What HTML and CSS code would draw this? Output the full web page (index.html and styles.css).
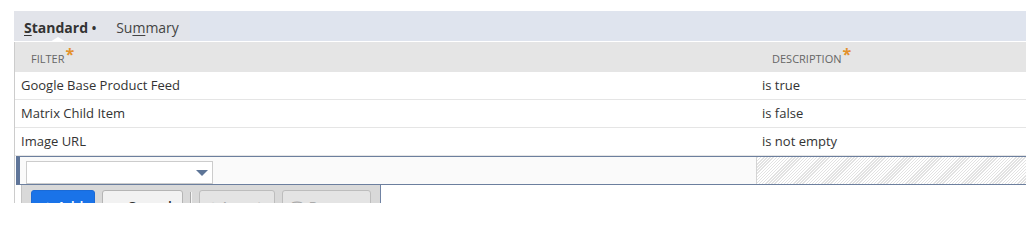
FILE: index.html
```html
<!DOCTYPE html>
<html>
<head>
<meta charset="utf-8">
<link rel="stylesheet" href="styles.css">
</head>
<body>
<div class="page">
  <div class="tabbar">
    <div class="tabgroup">
      <span class="tab active"><u>S</u>tandard <span class="dot">•</span></span>
      <span class="tab">Su<u>m</u>mary</span>
    </div>
  </div>
  <div class="grid">
    <div class="row head">
      <div class="c1">FILTER<span class="req">*</span></div>
      <div class="c2">DESCRIPTION<span class="req">*</span></div>
    </div>
    <div class="row">
      <div class="c1">Google Base Product Feed</div>
      <div class="c2">is true</div>
    </div>
    <div class="row">
      <div class="c1">Matrix Child Item</div>
      <div class="c2">is false</div>
    </div>
    <div class="row">
      <div class="c1">Image URL</div>
      <div class="c2">is not empty</div>
    </div>
    <div class="row edit">
      <div class="c1">
        <div class="select"><span class="caret"></span></div>
      </div>
      <div class="c2 hatch"></div>
    </div>
    <div class="btnbar">
      <button class="btn primary"><span class="ico">&#x2B06;</span>Add</button>
      <button class="btn"><span class="ico">&#x2716;</span>Cancel</button>
      <span class="sep"></span>
      <button class="btn disabled"><span class="ico">&#x2935;</span>Insert</button>
      <button class="btn disabled"><span class="ico">&#x1F5D1;</span>Remove</button>
    </div>
  </div>
</div>
</body>
</html>
```
FILE: styles.css
```css
* { box-sizing: border-box; }
html, body { margin: 0; padding: 0; background: #fff; height: 203px; overflow: hidden; }
body {
  font-family: "Open Sans", "Liberation Sans", sans-serif;
  font-size: 13px;
  color: #333;
}
.page {
  padding: 11px 0 0 14px;
}
.tabbar {
  height: 31px;
  background: #dfe4ee;
  border-bottom: 1px solid #fff;
  display: flex;
}
.tabgroup {
  width: 176px;
  background: #e2e4ea;
  display: flex;
  align-items: center;
  padding: 3px 0 0 10px;
  gap: 20px;
}
.tab {
  font-size: 14px;
  color: #444;
  position: relative;
  line-height: 27px;
}
.tab.active {
  font-weight: 700;
  color: #333;
}
.tab.active::after {
  content: "";
  position: absolute;
  left: 26px;
  bottom: 0;
  border-left: 8px solid transparent;
  border-right: 8px solid transparent;
  border-bottom: 5px solid #fff;
}
.tab .dot { font-weight: 700; font-size: 12px; }
.tab u { text-decoration-thickness: 1px; text-underline-offset: 2px; }
.grid {
  border-left: 1px solid #ccc;
}
.row {
  display: flex;
  height: 28px;
  border-bottom: 1px solid #e5e5e5;
  align-items: center;
  padding-bottom: 2px;
}
.row .c1 {
  width: 741px;
  padding-left: 6px;
  flex: none;
}
.row .c2 {
  flex: 1;
  padding-left: 6px;
}
.row.head {
  height: 30px;
  background: #e5e5e5;
  border-bottom: none;
  font-size: 11px;
  color: #666;
  padding: 0;
}
.row.head .c1, .row.head .c2 { padding-left: 16px; }
.req {
  color: #e3912d;
  font-size: 16px;
  font-weight: 700;
  position: relative;
  top: -3px;
  margin-left: 1px;
}
.row.edit {
  height: 29px;
  margin-left: 1px;
  border-top: 1px solid #6c7f9e;
  border-bottom: 1px solid #6c7f9e;
  border-left: 4px solid #5f7599;
  align-items: stretch;
  background: #fafafa;
  padding: 0;
}
.row.edit .c1 {
  width: 736px;
  padding: 4px 0 0 6px;
}
.select {
  width: 187px;
  height: 23px;
  background: #fff;
  border: 1px solid #ccc;
  position: relative;
}
.caret {
  position: absolute;
  right: 4px;
  top: 8px;
  border-left: 6px solid transparent;
  border-right: 6px solid transparent;
  border-top: 6px solid #5d7597;
}
.hatch {
  border-left: 1px solid #d4d4d4;
  background: repeating-linear-gradient(-45deg, #ffffff 0 1.2px, #e2e2e2 1.2px 2.2px);
}
.btnbar {
  margin-left: 6px;
  width: 360px;
  height: 40px;
  background: #d9d9d9;
  border-left: 1px solid #c4c4c4;
  border-right: 1px solid #7083a3;
  display: flex;
  align-items: flex-start;
  padding: 5px 0 0 9px;
  gap: 7px;
}
.btn {
  font-family: "Open Sans", "Liberation Sans", sans-serif;
  font-size: 14px;
  font-weight: 600;
  height: 28px;
  border-radius: 3px;
  border: 1px solid #b5b5b5;
  background: #f2f2f2;
  color: #333;
  padding: 0;
  line-height: 26px;
  display: flex;
  align-items: center;
  justify-content: center;
  gap: 5px;
  padding-top: 5px;
}
.btn .ico { font-size: 11px; color: #555; }
.btn.primary {
  width: 64px;
  background: #1a73e8;
  border-color: #1a6ad6;
  color: #fff;
}
.btn.primary .ico { color: #fff; }
.btn:nth-child(2) { width: 81px; }
.btn.disabled {
  background: #e4e4e4;
  color: #aaa;
  border-color: #bdbdbd;
}
.btn.disabled .ico { color: #aaa; }
.btn:nth-child(4) { width: 76px; }
.btn:nth-child(5) { width: 89px; }
.sep {
  width: 2px;
  height: 22px;
  margin-top: 2px;
  border-left: 1px solid #aaa;
  border-right: 1px solid #f4f4f4;
}
```
